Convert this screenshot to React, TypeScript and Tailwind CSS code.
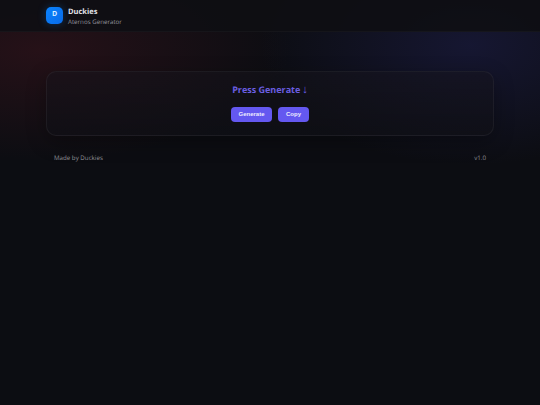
export default function App() {
  return (
    <div className="relative h-[405px] overflow-hidden bg-[#0c0d12] bg-[radial-gradient(ellipse_250px_110px_at_40px_50px,rgba(120,30,42,0.24),transparent),radial-gradient(ellipse_210px_120px_at_470px_45px,rgba(50,50,140,0.26),transparent)] font-['Open_Sans',sans-serif] text-white antialiased [text-rendering:geometricPrecision]">
      {/* header */}
      <header className="h-[32px] border-b border-white/[0.03] bg-[#0e0e13]/90">
        <div className="mx-[46px] flex h-[31px] items-center gap-[5px]">
          <div className="flex h-[17px] w-[17px] items-center justify-center rounded-[5px] bg-gradient-to-br from-[#0a84ff] to-[#0a6ae8] text-[7px] font-bold text-[#d8ebff] shadow-[0_0_8px_rgba(10,132,255,0.3)]">
            D
          </div>
          <div className="flex flex-col pt-[1px]">
            <div className="text-[7.5px] font-bold leading-[10px] text-[#e2e2e8]">Duckies</div>
            <div className="text-[6.2px] leading-[9px] text-[#94949c]">Aternos Generator</div>
          </div>
        </div>
      </header>

      <main className="mx-[46px] pt-[39px]">
        {/* card */}
        <section className="flex h-[65px] flex-col items-center rounded-[10px] border border-white/[0.05] bg-gradient-to-b from-[#16141c]/50 to-[#101016]/60 pt-[11px] shadow-[0_6px_20px_rgba(0,0,0,0.3)]">
          <div className="flex items-center gap-[2px] text-[9px] font-bold leading-[14px] text-[#6a5ee0]">
            <span>Press Generate</span>
            <span className="text-[11px] font-normal leading-[14px]">↓</span>
          </div>
          <div className="mt-[10px] flex gap-[6px]">
            <button className="h-[15px] w-[41px] rounded-[4px] bg-[#6458f0] font-['Liberation_Sans',sans-serif] text-[6px] font-bold text-[#ecebff]">
              Generate
            </button>
            <button className="h-[15px] w-[31px] rounded-[4px] bg-[#6458f0] font-['Liberation_Sans',sans-serif] text-[6px] font-bold text-[#ecebff]">
              Copy
            </button>
          </div>
        </section>

        {/* footer */}
        <footer className="mt-[17px] flex items-center justify-between px-[8px] text-[6.2px] leading-[10px] text-[#8e8e94]">
          <span>Made by Duckies</span>
          <span>v1.0</span>
        </footer>
      </main>
    </div>
  )
}
